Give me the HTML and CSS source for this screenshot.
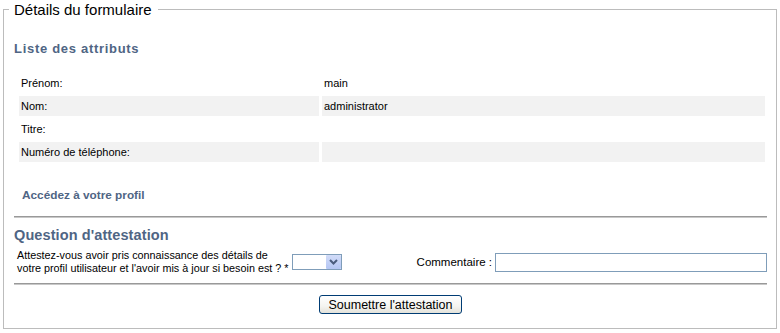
FILE: index.html
```html
<!DOCTYPE html>
<html lang="fr">
<head>
    <meta charset="UTF-8">
    <title>Détails du formulaire</title>
    <link rel="stylesheet" href="styles.css">
</head>
<body>
    <fieldset class="form-details">
        <legend>Détails du formulaire</legend>

        <h2 class="section-title">Liste des attributs</h2>
        <table class="attr-table">
            <tr><td class="attr-label">Prénom:</td><td>main</td></tr>
            <tr class="alt"><td class="attr-label">Nom:</td><td>administrator</td></tr>
            <tr><td class="attr-label">Titre:</td><td></td></tr>
            <tr class="alt"><td class="attr-label">Numéro de téléphone:</td><td></td></tr>
        </table>

        <a class="profile-link" href="#">Accédez à votre profil</a>

        <hr class="divider">

        <h2 class="section-title big">Question d'attestation</h2>
        <div class="question-row">
            <div class="question-text">Attestez-vous avoir pris connaissance des détails de<br>votre profil utilisateur et l'avoir mis à jour si besoin est ? *</div>
            <div class="select-wrap">
                <select class="answer-select">
                    <option></option>
                    <option>Oui</option>
                    <option>Non</option>
                </select>
                <span class="select-arrow">
                    <svg viewBox="0 0 9 6" width="9" height="6"><path d="M1 1l3.5 3.5L8 1" fill="none" stroke="#4a5c7e" stroke-width="2"/></svg>
                </span>
            </div>
            <label class="comment-label" for="comment">Commentaire :</label>
            <input class="comment-input" id="comment" type="text">
        </div>

        <hr class="divider second">

        <div class="actions">
            <button class="submit-button" type="button">Soumettre l'attestation</button>
        </div>
    </fieldset>
</body>
</html>
```

FILE: styles.css
```css
* { box-sizing: border-box; }
body {
    margin: 0;
    background: #fff;
    font-family: "Liberation Sans", Arial, sans-serif;
    font-size: 11px;
    color: #000;
}
.form-details {
    margin: 0 3px;
    height: 329px;
    padding: 0 9px 0 10px;
    border: 1px solid #bcbcbc;
}
.form-details legend {
    margin-left: -5px;
    padding: 0 6px 0 5px;
    font-size: 15px;
    line-height: 19px;
    color: #000;
}
.section-title {
    margin: 21px 0 0;
    font-size: 13px;
    line-height: 18px;
    font-weight: bold;
    letter-spacing: 0.7px;
    color: #4f6584;
}
.section-title.big {
    margin: 8px 0 0;
    font-size: 14.5px;
    letter-spacing: 0.1px;
    line-height: 18px;
}
.attr-table {
    margin: 12px 0 0 2px;
    width: calc(100% - 1px);
    border-spacing: 3px;
}
.attr-table td {
    height: 20px;
    padding: 0 2px;
    vertical-align: middle;
}
.attr-table .attr-label { width: 300px; }
.attr-table tr.alt td { background: #f2f2f2; }
.profile-link {
    display: block;
    margin: 22px 0 0 8px;
    font-size: 11.8px;
    line-height: 16px;
    font-weight: bold;
    color: #4f6584;
    text-decoration: none;
}
.divider {
    margin: 13px 0 0;
    height: 0;
    border: none;
    border-top: 1px solid #999;
    border-bottom: 1px solid #c8c8c8;
}
.divider.second { margin-top: 8px; }
.question-row {
    display: flex;
    align-items: center;
    margin-top: 5px;
}
.question-text {
    flex: none;
    padding-left: 3px;
    font-size: 10.8px;
    line-height: 13px;
    white-space: nowrap;
}
.select-wrap {
    position: relative;
    flex: none;
    width: 50px;
    height: 16px;
    margin-left: 3px;
}
.answer-select {
    appearance: none;
    width: 100%;
    height: 100%;
    border: 1px solid #7f9db9;
    border-radius: 0;
    background: #fff;
    font: inherit;
}
.select-arrow {
    position: absolute;
    top: 1px;
    right: 1px;
    width: 15px;
    height: 14px;
    display: flex;
    align-items: center;
    justify-content: center;
    background: linear-gradient(#d2dcf8, #b4c6f4);
    border-radius: 1px;
    pointer-events: none;
}
.comment-label {
    flex: 1;
    padding-right: 3px;
    text-align: right;
    font-size: 11.5px;
}
.comment-input {
    flex: none;
    width: 272px;
    height: 19px;
    border: 1px solid #7f9db9;
    font: inherit;
}
.actions {
    display: flex;
    justify-content: center;
    margin-top: 10px;
}
.submit-button {
    width: 143px;
    height: 19px;
    padding: 0;
    border: 1px solid #003c74;
    border-radius: 3px;
    background: linear-gradient(#ffffff 0%, #f4f4f0 60%, #e3e2da 100%);
    font-family: "Liberation Sans", Arial, sans-serif;
    font-size: 12.5px;
    color: #000;
    cursor: pointer;
}
```
